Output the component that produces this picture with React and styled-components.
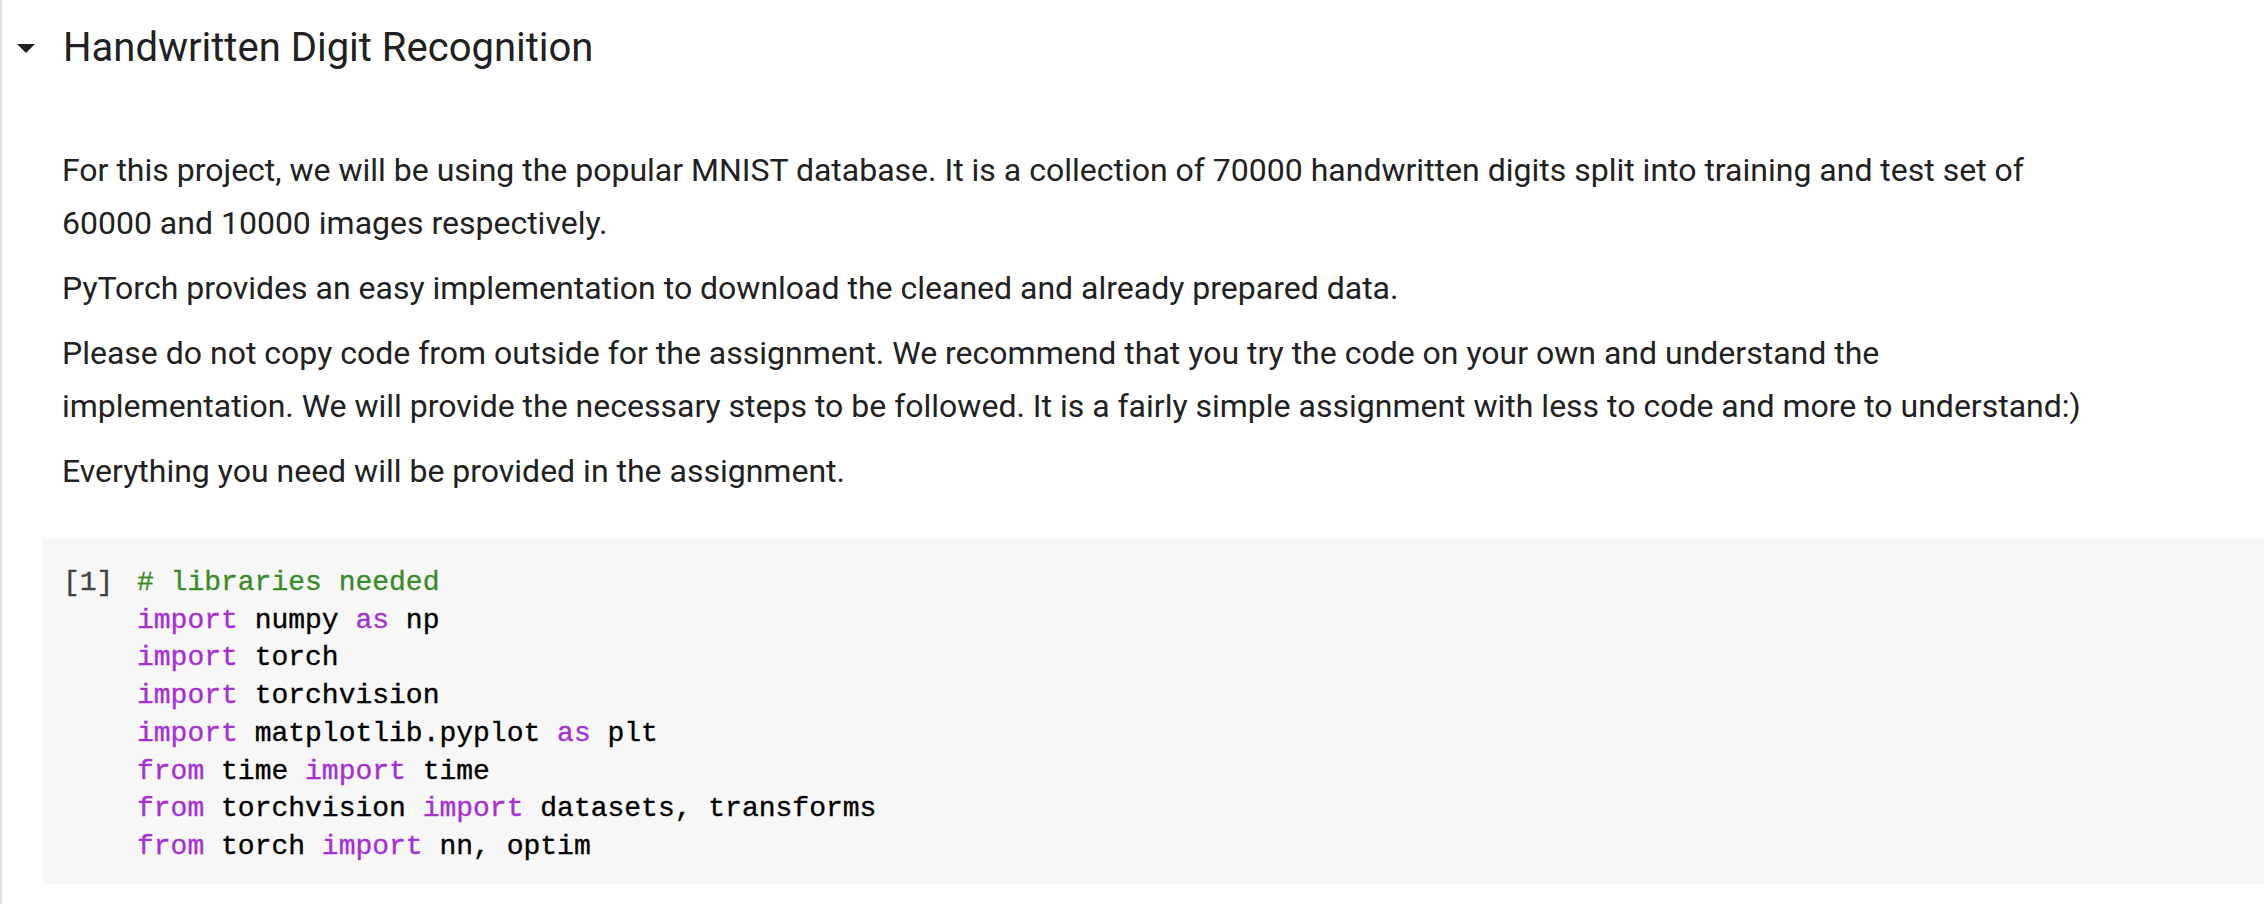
import React from 'react';
import styled, { createGlobalStyle } from 'styled-components';

const GlobalStyle = createGlobalStyle`
  html, body {
    margin: 0;
    padding: 0;
    background: #ffffff;
  }
  body {
    font-family: Roboto, 'Noto Sans', sans-serif;
    color: #212121;
  }
`;

const Notebook = styled.div`
  min-height: 100vh;
  border-left: 2px solid #e0e0e0;
  box-sizing: border-box;
`;

const SectionHeader = styled.div`
  display: flex;
  align-items: center;
  height: 48px;
  padding-top: 24px;
`;

const Toggle = styled.button`
  display: flex;
  align-items: center;
  justify-content: center;
  width: 18px;
  height: 48px;
  margin-left: 15px;
  padding: 0;
  border: none;
  background: none;
  cursor: pointer;
  svg {
    display: block;
  }
`;

const Heading = styled.h1`
  margin: 0 0 0 28px;
  font-size: 40px;
  line-height: 48px;
  font-weight: 400;
  color: #212121;
`;

const Markdown = styled.div`
  padding: 72px 40px 0 60px;
  font-size: 32px;
  line-height: 53px;
  p {
    margin: 0 0 12px;
  }
`;

const CodeCell = styled.div`
  display: flex;
  margin: 41px 0 0 41px;
  padding: 25px 0 18px 20px;
  background: #f7f7f7;
  font-family: 'Liberation Mono', 'Courier New', monospace;
  font-size: 28px;
  line-height: 37.7px;
  -webkit-text-stroke: 0.35px currentColor;
`;

const Prompt = styled.div`
  width: 74px;
  flex-shrink: 0;
  color: #424242;
`;

const Code = styled.pre`
  margin: 0;
  font: inherit;
  color: #000000;
`;

const Token = styled.span`
  color: ${(p) => (p.kind === 'comment' ? '#3a8a2a' : p.kind === 'kw' ? '#a52fd3' : 'inherit')};
`;

const lines = [
  [['comment', '# libraries needed']],
  [['kw', 'import'], ['', ' numpy '], ['kw', 'as'], ['', ' np']],
  [['kw', 'import'], ['', ' torch']],
  [['kw', 'import'], ['', ' torchvision']],
  [['kw', 'import'], ['', ' matplotlib.pyplot '], ['kw', 'as'], ['', ' plt']],
  [['kw', 'from'], ['', ' time '], ['kw', 'import'], ['', ' time']],
  [['kw', 'from'], ['', ' torchvision '], ['kw', 'import'], ['', ' datasets, transforms']],
  [['kw', 'from'], ['', ' torch '], ['kw', 'import'], ['', ' nn, optim']],
];

export default function App() {
  return (
    <>
      <GlobalStyle />
      <Notebook>
        <SectionHeader>
          <Toggle aria-label="Collapse section">
            <svg width="18" height="9" viewBox="0 0 18 9">
              <path d="M0 0 L18 0 L9 9 Z" fill="#212121" />
            </svg>
          </Toggle>
          <Heading>Handwritten Digit Recognition</Heading>
        </SectionHeader>
        <Markdown>
          <p>
            For this project, we will be using the popular MNIST database. It is a collection of 70000 handwritten digits split into training and test set of
            <br />
            60000 and 10000 images respectively.
          </p>
          <p>PyTorch provides an easy implementation to download the cleaned and already prepared data.</p>
          <p>
            Please do not copy code from outside for the assignment. We recommend that you try the code on your own and understand the
            <br />
            implementation. We will provide the necessary steps to be followed. It is a fairly simple assignment with less to code and more to understand:)
          </p>
          <p>Everything you need will be provided in the assignment.</p>
        </Markdown>
        <CodeCell>
          <Prompt>[1]</Prompt>
          <Code>
            {lines.map((line, i) => (
              <div key={i}>
                {line.map(([kind, text], j) => (
                  <Token key={j} kind={kind}>
                    {text}
                  </Token>
                ))}
              </div>
            ))}
          </Code>
        </CodeCell>
      </Notebook>
    </>
  );
}
